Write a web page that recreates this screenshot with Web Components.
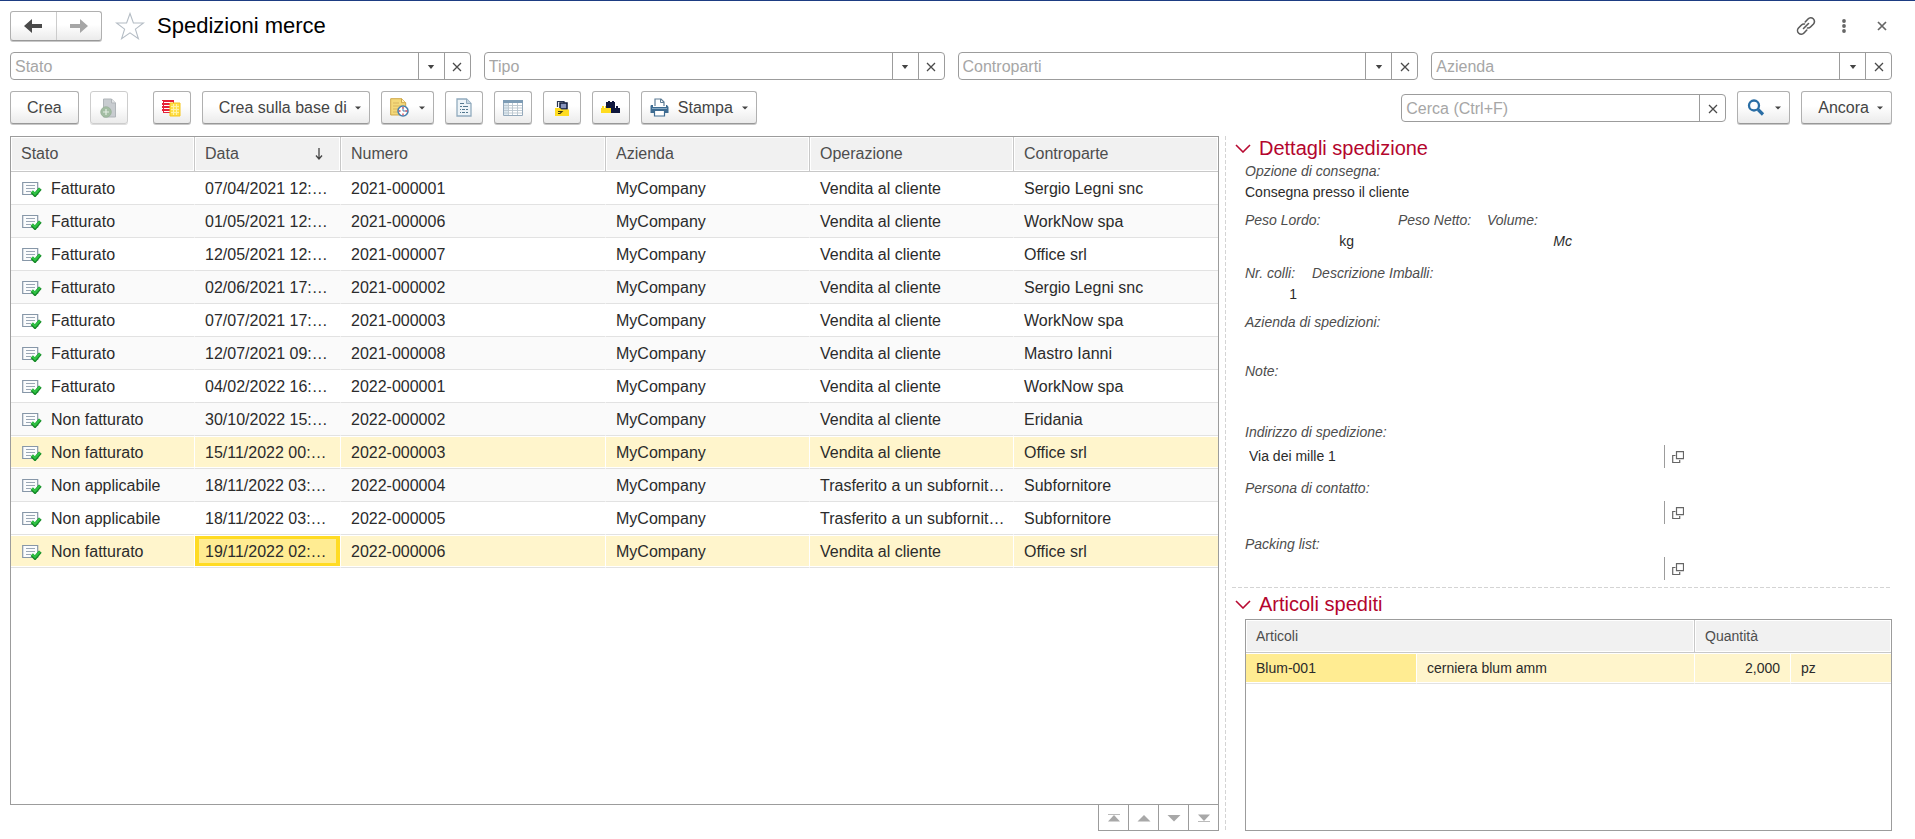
<!DOCTYPE html>
<html lang="it">
<head>
<meta charset="utf-8">
<title>Spedizioni merce</title>
<style>
  body { margin: 0; background: #fff; font-family: "Liberation Sans", Arial, sans-serif; font-size: 16px; color: #333; }
</style>
</head>
<body>
<shipments-page></shipments-page>

<script>
const ICONS = {
  back: [18, 14, '<path d="M0 7 8 0v5h10v4H8v5z" fill="#4a4a4a"/>'],
  forward: [18, 14, '<path d="M18 7 10 0v5H0v4h10v5z" fill="#a6a6a6"/>'],
  star: [30, 28, '<path d="M15 1.5 18.4 11h10.1l-8.1 6.1 3 9.6L15 20.9l-8.4 5.8 3-9.6L1.5 11h10.1z" fill="#fff" stroke="#b4bcc4" stroke-width="1.1"/>'],
  link: [20, 20, '<g fill="none" stroke="#5c5c5c" stroke-width="1.6" stroke-linecap="round"><path d="M9.200 6 12 3a3.700 3.700 0 0 1 5.500 5L14.500 11a3.500 3.500 0 0 1-3 1"/><path d="M10.800 14 8 17a3.700 3.700 0 0 1-5.500-5L5.500 9a3.500 3.500 0 0 1 3-1"/><path d="M7.500 12.500 12.500 7.500"/></g>'],
  kebab: [6, 16, '<g fill="#666"><circle cx="3" cy="3" r="1.900"/><circle cx="3" cy="8" r="1.900"/><circle cx="3" cy="13" r="1.900"/></g>'],
  close: [10, 10, '<path d="m1 1 8 8M9 1 1 9" stroke="#666" stroke-width="1.700"/>'],
  clear: [10, 10, '<path d="m1 1 8 8M9 1 1 9" stroke="#4a4a4a" stroke-width="1.300"/>'],
  down: [8, 6, '<path d="M.8 1h6.400L4 5z" fill="#444"/>'],
  caret: [6, 4, '<path d="M0 .5h6L3 3.600z" fill="#444"/>'],
  sort: [8, 12, '<path d="M4 0v10M1 7.500l3 3.500 3-3.500" fill="none" stroke="#444" stroke-width="1.300"/>'],
  copy: [18, 20, '<path d="M3.500 1h8l4 4v14h-12z" fill="#c8ccd0" stroke="#b0b5b9"/><path d="M11.500 1v4h4" fill="#e4e6e8" stroke="#b0b5b9"/><circle cx="6" cy="14" r="5.300" fill="#a3bda3" stroke="#94ae94" stroke-width=".7"/><path d="M6 11v6M3 14h6" stroke="#e4eee4" stroke-width="1.200"/>'],
  lists: [19, 18, '<path d="M1 1h11v13H1z" fill="#e62138"/><path d="M2 3.500h9M2 6.500h9M2 9.500h9M2 12.500h9" stroke="#fff" stroke-width="1"/><path d="M0 1h1v1H0zM0 4h1v2H0zM0 7h1v2H0zM0 10h1v2H0z" fill="#e62138"/><path d="M8 4h10v13H8z" fill="#ffe04a" stroke="#f5c518"/><path d="M9 7.500h8M9 10.500h8M9 13.500h8M11.500 5v11M14.500 5v11" stroke="#fff3a6"/>'],
  pending: [19, 19, '<path d="M.7.700h11l4 4V17H.700z" fill="#f4d97a" stroke="#cfa748"/><path d="M11.500.700v4h4" fill="#fff0b8" stroke="#cfa748"/><path d="M3 5h6M3 8h9M3 11h5M3 14h4" stroke="#d9b660"/><circle cx="13" cy="13" r="5" fill="#fff" stroke="#477fae" stroke-width="1.600"/><path d="M13 13V9.500M13 13h3" stroke="#477fae"/><path d="M13 8.900v1.600M13 15.600v1.600M8.900 13h1.600M15.600 13h1.600" stroke="#e1404c" stroke-width="1.300"/>'],
  report: [16, 19, '<path d="M1 1h9.500L15 5.500V18H1z" fill="#edf4f8" stroke="#91abbe" stroke-width="1.300"/><path d="M10.500 1v4.500H15" fill="#c4d5e0" stroke="#91abbe"/><path d="M4 5.500h4M4 8.500h2M7 8.500h5M4 11.500h1M6 11.500h3M10 11.500h2M4 14.500h1M6 14.500h3M10 14.500h2" stroke="#54788f" stroke-width="1.200"/>'],
  grid: [20, 16, '<path d="M.5.500h19v15H.500z" fill="#fff" stroke="#94a9bb"/><path d="M0 0h20v3H0z" fill="#7d9cb5"/><path d="M1 3h4v12H1z" fill="#dbe7ef"/><path d="M1 5.500h18M1 8h18M1 10.500h18M1 13h18M5.500 3v12M9.500 3v12M14.500 3v12" stroke="#b9c5ce" stroke-width=".9"/>'],
  label: [16, 16, '<path d="M3.500 7V1.500H10V3" fill="none" stroke="#273350" stroke-width="1.200"/><path d="M6 3h7v6H6z" fill="#8894bc" stroke="#111b3a" stroke-width="1.500"/><path d="M1 8h5l1.500 1.500H15V16H1z" fill="#ffdc20"/><path d="M4 11.500h4l-2 2H4" fill="none" stroke="#443d12" stroke-width="1.200"/>'],
  blocks: [19, 13, '<path d="M0 7h1V5h2v2h1V5h2v2h4v5H0z" fill="#ffdc20"/><path d="M5 1h2V0h2v1h2V0h2v1h1v6h1V5h2v2h2v5H10V7H5z" fill="#10183d"/>'],
  printer: [19, 19, '<path d="M5 8V1h6l3 3v4" fill="#fff" stroke="#5e7d96" stroke-width="1.200"/><path d="M10.500 1v3.500H14" fill="none" stroke="#5e7d96"/><path d="M1 7h2v2h13V7h1l1.500 2v6H.500V8z" fill="#3e6c92"/><path d="M2 10.500h15" stroke="#87a9c3"/><path d="M4.500 12.500h10V18h-10z" fill="#fff" stroke="#3e6c92" stroke-width="1.200"/>'],
  search: [19, 17, '<circle cx="8" cy="6.500" r="5" fill="none" stroke="#2a6ea5" stroke-width="2.300"/><path d="m12 10.500 5 5" stroke="#2a6ea5" stroke-width="3.200"/>'],
  posted: [21, 16, '<path d="M1.700 1.500h15v12h-15z" fill="#fbfcfd" stroke="#8797a8" stroke-width="1.200"/><path d="M5 4.500h9M5 7.500h9M5 10.500h5" stroke="#9aa7b5" stroke-width="1.100"/><path d="M10.800 10.800 14 14 19.300 7.700" fill="none" stroke="#158a26" stroke-width="3.600"/><path d="M11 10.300 14 13 18.900 7.500" fill="none" stroke="#2fc244" stroke-width="2"/>'],
  chevron: [16, 9, '<path d="m1 1 7 7 7-7" fill="none" stroke="#b80a32" stroke-width="1.600"/>'],
  open: [12, 12, '<path d="M4.500.700h7v7h-7z" fill="#fff" stroke="#666" stroke-width="1.200"/><path d="M3.500 4.500H.700v7h7V9" fill="none" stroke="#666" stroke-width="1.200"/>'],
  first: [14, 8, '<path d="M1 .500h12" stroke="#bbb"/><path d="M7 1 13 7.500H1z" fill="#a8a8a8"/>'],
  prev: [14, 8, '<path d="M7 1 13.500 7.500H.500z" fill="#a8a8a8"/>'],
  next: [14, 8, '<path d="M7 7.500.500 1h13z" fill="#a8a8a8"/>'],
  last: [14, 8, '<path d="M1 7.500h12" stroke="#bbb"/><path d="M7 7 1 .500h12z" fill="#a8a8a8"/>']
};

class BaseElement extends HTMLElement {
  render(html) {
    if (!this.shadowRoot) this.attachShadow({ mode: 'open' });
    this.shadowRoot.innerHTML = html;
  }
}

class AppIcon extends BaseElement {
  connectedCallback() {
    const [w, h, body] = ICONS[this.getAttribute('name')];
    this.render(`<style>:host{display:inline-flex;flex:none}svg{display:block}</style>
      <svg width="${w}" height="${h}" viewBox="0 0 ${w} ${h}" aria-hidden="true">${body}</svg>`);
  }
}

class ToolButton extends BaseElement {
  connectedCallback() {
    const menu = this.hasAttribute('menu') ? '<app-icon name="caret"></app-icon>' : '';
    const name = this.getAttribute('label');
    this.render(`<style>
      :host{display:inline-flex;flex:none}
      button{display:flex;align-items:center;justify-content:center;gap:8px;height:33px;min-width:38px;box-sizing:border-box;margin:0;
        padding:0 8px;border:1px solid #b0b0b0;border-bottom-color:#989898;border-radius:3px;font:inherit;color:#444;white-space:nowrap;
        background:linear-gradient(#fff 45%,#ebebeb);box-shadow:0 1px 0 #c8c8c8}
      button:disabled{border-color:#cdcdcd;box-shadow:0 1px 0 #ddd}
      :host([text]) button{padding:0 16px}
      :host([menu]) button{gap:10px}
      :host([pair]) button{gap:9px}
      :host([wide]) button{padding:0 8px 0 16px;gap:8px}
    </style><button type="button" ${name ? `aria-label="${name}"` : ''} ${this.hasAttribute('disabled') ? 'disabled' : ''}><slot></slot>${menu}</button>`);
  }
}

class HistoryButtons extends BaseElement {
  connectedCallback() {
    this.render(`<style>
      :host{display:flex;width:92px;height:30px;box-sizing:border-box;border:1px solid #b0b0b0;border-bottom-color:#989898;border-radius:3px;
        background:linear-gradient(#fff 45%,#ebebeb);box-shadow:0 1px 0 #c8c8c8}
      button{flex:1;display:flex;align-items:center;justify-content:center;border:0;padding:0;background:none}
      button+button{border-left:1px solid #ccc}
    </style>
    <button type="button" aria-label="Indietro"><app-icon name="back"></app-icon></button>
    <button type="button" aria-label="Avanti"><app-icon name="forward"></app-icon></button>`);
  }
}

class EntryBox extends BaseElement {
  connectedCallback() {
    const text = this.getAttribute('placeholder');
    const drop = this.hasAttribute('dropdown') ? '<button type="button" aria-label="Scegli"><app-icon name="down"></app-icon></button>' : '';
    this.render(`<style>
      :host{display:flex;height:28px;box-sizing:border-box;border:1px solid #9c9c9c;border-radius:4px;background:#fff;overflow:hidden}
      input{flex:1;min-width:0;border:0;margin:0;padding:1px 4px 0;font:inherit;color:#333;background:none;outline:0}
      input::placeholder{color:#a6a6a6;opacity:1}
      button{width:26px;flex:none;display:flex;align-items:center;justify-content:center;border:0;border-left:1px solid #9c9c9c;padding:1px 0 0;background:none}
    </style><input type="text" aria-label="${text}" placeholder="${text}">${drop}<button type="button" aria-label="Cancella"><app-icon name="clear"></app-icon></button>`);
  }
}

class TitleBar extends BaseElement {
  connectedCallback() {
    this.render(`<style>
      :host{display:flex;align-items:center;height:30px}
      h1{margin:0 auto 0 12px;font-size:22px;line-height:30px;font-weight:400;color:#000}
      button{display:flex;align-items:center;justify-content:center;border:0;padding:0;background:none}
      .star{margin-left:13px}
      nav{display:flex;align-items:center;gap:18px}
      nav button{width:20px;height:28px}
    </style>
    <history-buttons></history-buttons>
    <button class="star" type="button" aria-label="Preferiti"><app-icon name="star"></app-icon></button>
    <h1><slot></slot></h1>
    <nav>
      <button type="button" aria-label="Collegamento"><app-icon name="link"></app-icon></button>
      <button type="button" aria-label="Altro"><app-icon name="kebab"></app-icon></button>
      <button type="button" aria-label="Chiudi"><app-icon name="close"></app-icon></button>
    </nav>`);
  }
}

const GRID_STYLE = `
  :host{display:block;box-sizing:border-box;border:1px solid #9c9c9c;background:#fff}
  table{width:100%;table-layout:fixed;border-collapse:separate;border-spacing:0}
  th,td{box-sizing:border-box;padding:0 10px;text-align:left;font-weight:400;white-space:nowrap;overflow:hidden}
  th{background:#f1f1f1;color:#4d4d4d;border-right:1px solid #c8c8c8;border-bottom:1px solid #c8c8c8;box-shadow:inset 0 0 0 1px #fff}
  td{color:#2b2b2b;border-right:1px solid transparent;border-bottom:1px solid #e2e2e2}
  th:last-child,td:last-child{border-right:0}
  tr.marked td{background:#fff5cc;border-right-color:#fff;box-shadow:inset 0 1px #fff,inset 0 -1px #fff}`;

class ShipmentList extends BaseElement {
  connectedCallback() {
    const F = 'Fatturato', N = 'Non fatturato', A = 'Non applicabile', V = 'Vendita al cliente', T = 'Trasferito a un subfornit…';
    const rows = [
      [F, '07/04/2021 12:…', '2021-000001', V, 'Sergio Legni snc'],
      [F, '01/05/2021 12:…', '2021-000006', V, 'WorkNow spa'],
      [F, '12/05/2021 12:…', '2021-000007', V, 'Office srl'],
      [F, '02/06/2021 17:…', '2021-000002', V, 'Sergio Legni snc'],
      [F, '07/07/2021 17:…', '2021-000003', V, 'WorkNow spa'],
      [F, '12/07/2021 09:…', '2021-000008', V, 'Mastro Ianni'],
      [F, '04/02/2022 16:…', '2022-000001', V, 'WorkNow spa'],
      [N, '30/10/2022 15:…', '2022-000002', V, 'Eridania'],
      [N, '15/11/2022 00:…', '2022-000003', V, 'Office srl', 'marked'],
      [A, '18/11/2022 03:…', '2022-000004', T, 'Subfornitore'],
      [A, '18/11/2022 03:…', '2022-000005', T, 'Subfornitore'],
      [N, '19/11/2022 02:…', '2022-000006', V, 'Office srl', 'marked current']
    ];
    const body = rows.map(([state, date, number, op, party, cls = ''], i) =>
      `<tr class="${cls || (i % 2 ? 'striped' : '')}"><td><span class="state"><app-icon name="posted"></app-icon>${state}</span></td><td class="date">${date}</td><td>${number}</td><td>MyCompany</td><td>${op}</td><td>${party}</td></tr>`).join('');
    this.render(`<style>${GRID_STYLE}
      th{height:35px}
      td{height:33px;padding-top:2px}
      .striped td{background:#fafafa}
      .state,.sorted{display:flex;align-items:center}
      .state{gap:9px}
      .sorted{justify-content:space-between;padding-right:7px}
      .marked.current .date{background:#ffec92;box-shadow:inset 0 1px #fff,inset 0 -1px #fff,inset 0 0 0 4px #ffdb24}
    </style>
    <table>
      <colgroup><col style="width:184px"><col style="width:146px"><col style="width:265px"><col style="width:204px"><col style="width:204px"><col style="width:auto"></colgroup>
      <thead><tr><th>Stato</th><th><span class="sorted">Data<app-icon name="sort"></app-icon></span></th><th>Numero</th><th>Azienda</th><th>Operazione</th><th>Controparte</th></tr></thead>
      <tbody>${body}</tbody>
    </table>`);
  }
}

class ItemList extends BaseElement {
  connectedCallback() {
    this.render(`<style>${GRID_STYLE}
      :host{font-size:14px}
      th{height:33px}
      td{height:31px}
      .marked .key{background:#ffec92}
      .num{text-align:right}
    </style>
    <table>
      <colgroup><col style="width:171px"><col style="width:278px"><col style="width:96px"><col style="width:auto"></colgroup>
      <thead><tr><th colspan="2">Articoli</th><th colspan="2">Quantità</th></tr></thead>
      <tbody><tr class="marked"><td class="key">Blum-001</td><td>cerniera blum amm</td><td class="num">2,000</td><td>pz</td></tr></tbody>
    </table>`);
  }
}

class ListPager extends BaseElement {
  connectedCallback() {
    const names = { first: 'Inizio', prev: 'Su', next: 'Giù', last: 'Fine' };
    this.render(`<style>
      :host{display:flex;align-self:flex-end;border-right:1px solid #9c9c9c}
      button{width:30px;height:26px;box-sizing:border-box;display:flex;align-items:center;justify-content:center;padding:0;border:0;
        border-left:1px solid #9c9c9c;border-bottom:1px solid #9c9c9c;background:#fff}
    </style>${Object.entries(names).map(([icon, name]) => `<button type="button" aria-label="${name}"><app-icon name="${icon}"></app-icon></button>`).join('')}`);
  }
}

class DetailField extends BaseElement {
  connectedCallback() {
    const value = this.getAttribute('value') || '';
    const unit = this.getAttribute('unit');
    this.render(`<style>
      :host{display:block;font-size:14px;line-height:21px}
      label{display:block;font-style:italic;color:#4d4d4d;white-space:nowrap}
      .line{display:flex;height:21px}
      input{flex:1;min-width:0;width:0;border:0;margin:0;padding:0;font:inherit;line-height:21px;color:#2b2b2b;background:none;outline:0}
      .unit{flex:none;color:#2b2b2b}
      :host([numeric]) input{text-align:right}
      :host([italic]) .unit{font-style:italic}
      button{display:flex;align-items:center;border:0;border-left:1px solid #9c9c9c;padding:0 0 0 7px;background:none}
      :host([link]){width:440px;max-width:100%}
      :host([link]) .line{height:23px;margin-top:2px}
      :host([link]) input{padding-left:4px}
      :host([link]) button{width:21px}
    </style>
    <label for="value">${this.getAttribute('label')}</label>
    <div class="line"><input id="value" type="text" readonly value="${value}">${unit ? `<span class="unit">${unit}</span>` : ''}${this.hasAttribute('link') ? '<button type="button" aria-label="Apri"><app-icon name="open"></app-icon></button>' : ''}</div>`);
  }
}

class DetailGroup extends BaseElement {
  connectedCallback() {
    this.render(`<style>
      :host{display:flex;flex-direction:column}
      h2{margin:0;font-size:20px;line-height:24px;font-weight:400;color:#b4052d}
      h2 button{display:flex;align-items:center;gap:8px;border:0;padding:0;font:inherit;color:inherit;background:none}
      .content{flex:1;display:flex;flex-direction:column;padding-left:10px}
    </style><h2><button type="button" aria-expanded="true"><app-icon name="chevron"></app-icon>${this.getAttribute('heading')}</button></h2><div class="content"><slot></slot></div>`);
  }
}

class ShipmentDetails extends BaseElement {
  connectedCallback() {
    const dash = 'repeating-linear-gradient';
    this.render(`<style>
      :host{display:flex;flex-direction:column;box-sizing:border-box;padding-left:10px;
        background:${dash}(to bottom,#d4d4d4 0 4px,transparent 4px 6px) left top/1px 100% no-repeat}
      .row{display:flex}
      .delivery{margin-top:1px}
      .weights{margin-top:7px}
      .packages{margin-top:11px;gap:15px}
      .carrier,.notes{margin-top:7px}
      .notes{margin-bottom:19px}
      .links{display:flex;flex-direction:column;gap:10px}
      .gross{width:109px;margin-right:44px}
      .net{width:89px}
      .volume{width:85px}
      .count{width:52px}
      .descr{flex:1}
      .rule{height:1px;margin:7px 0 4px -3px;background:${dash}(to right,#d4d4d4 0 4px,transparent 4px 6px)}
      .items{flex:1}
      item-list{flex:1;margin-top:3px}
    </style>
    <detail-group heading="Dettagli spedizione">
      <detail-field class="delivery" label="Opzione di consegna:" value="Consegna presso il cliente"></detail-field>
      <div class="row weights">
        <detail-field class="gross" label="Peso Lordo:" unit="kg" numeric></detail-field>
        <detail-field class="net" label="Peso Netto:" numeric></detail-field>
        <detail-field class="volume" label="Volume:" unit="Mc" numeric italic></detail-field>
      </div>
      <div class="row packages">
        <detail-field class="count" label="Nr. colli:" value="1" numeric></detail-field>
        <detail-field class="descr" label="Descrizione Imballi:"></detail-field>
      </div>
      <detail-field class="carrier" label="Azienda di spedizioni:"></detail-field>
      <detail-field class="notes" label="Note:"></detail-field>
      <div class="links">
        <detail-field label="Indirizzo di spedizione:" value="Via dei mille 1" link></detail-field>
        <detail-field label="Persona di contatto:" link></detail-field>
        <detail-field label="Packing list:" link></detail-field>
      </div>
    </detail-group>
    <div class="rule"></div>
    <detail-group class="items" heading="Articoli spediti"><item-list></item-list></detail-group>`);
  }
}

class ShipmentsPage extends BaseElement {
  connectedCallback() {
    this.render(`<style>
      :host{display:flex;flex-direction:column;gap:11px;box-sizing:border-box;min-height:100vh;padding:10px 23px 8px 10px;border-top:1px solid #1d3c82}
      .filters{display:flex;gap:13px}
      .filters entry-box{flex:1}
      .toolbar{display:flex;align-items:flex-start;gap:11px;height:34px}
      .gap{margin-left:14px}
      .find{width:325px;margin:3px 0 0 auto}
      main{flex:1;display:grid;grid-template-columns:minmax(0,1209fr) minmax(0,667fr);gap:6px}
      .list{display:flex;flex-direction:column}
      shipment-list{flex:1}
    </style>
    <title-bar>Spedizioni merce</title-bar>
    <div class="filters">
      <entry-box placeholder="Stato" dropdown></entry-box>
      <entry-box placeholder="Tipo" dropdown></entry-box>
      <entry-box placeholder="Controparti" dropdown></entry-box>
      <entry-box placeholder="Azienda" dropdown></entry-box>
    </div>
    <div class="toolbar">
      <tool-button text>Crea</tool-button>
      <tool-button label="Copia" disabled><app-icon name="copy"></app-icon></tool-button>
      <tool-button class="gap" label="Registri"><app-icon name="lists"></app-icon></tool-button>
      <tool-button wide menu>Crea sulla base di</tool-button>
      <tool-button label="Promemoria" menu><app-icon name="pending"></app-icon></tool-button>
      <tool-button label="Report"><app-icon name="report"></app-icon></tool-button>
      <tool-button label="Tabella"><app-icon name="grid"></app-icon></tool-button>
      <tool-button label="Etichette"><app-icon name="label"></app-icon></tool-button>
      <tool-button label="Moduli"><app-icon name="blocks"></app-icon></tool-button>
      <tool-button pair menu><app-icon name="printer"></app-icon>Stampa</tool-button>
      <entry-box class="find" placeholder="Cerca (Ctrl+F)"></entry-box>
      <tool-button label="Cerca" menu><app-icon name="search"></app-icon></tool-button>
      <tool-button wide menu>Ancora</tool-button>
    </div>
    <main>
      <div class="list"><shipment-list></shipment-list><list-pager></list-pager></div>
      <shipment-details></shipment-details>
    </main>`);
  }
}

customElements.define('app-icon', AppIcon);
customElements.define('tool-button', ToolButton);
customElements.define('history-buttons', HistoryButtons);
customElements.define('entry-box', EntryBox);
customElements.define('title-bar', TitleBar);
customElements.define('shipment-list', ShipmentList);
customElements.define('item-list', ItemList);
customElements.define('list-pager', ListPager);
customElements.define('detail-field', DetailField);
customElements.define('detail-group', DetailGroup);
customElements.define('shipment-details', ShipmentDetails);
customElements.define('shipments-page', ShipmentsPage);
</script>
</body>
</html>
